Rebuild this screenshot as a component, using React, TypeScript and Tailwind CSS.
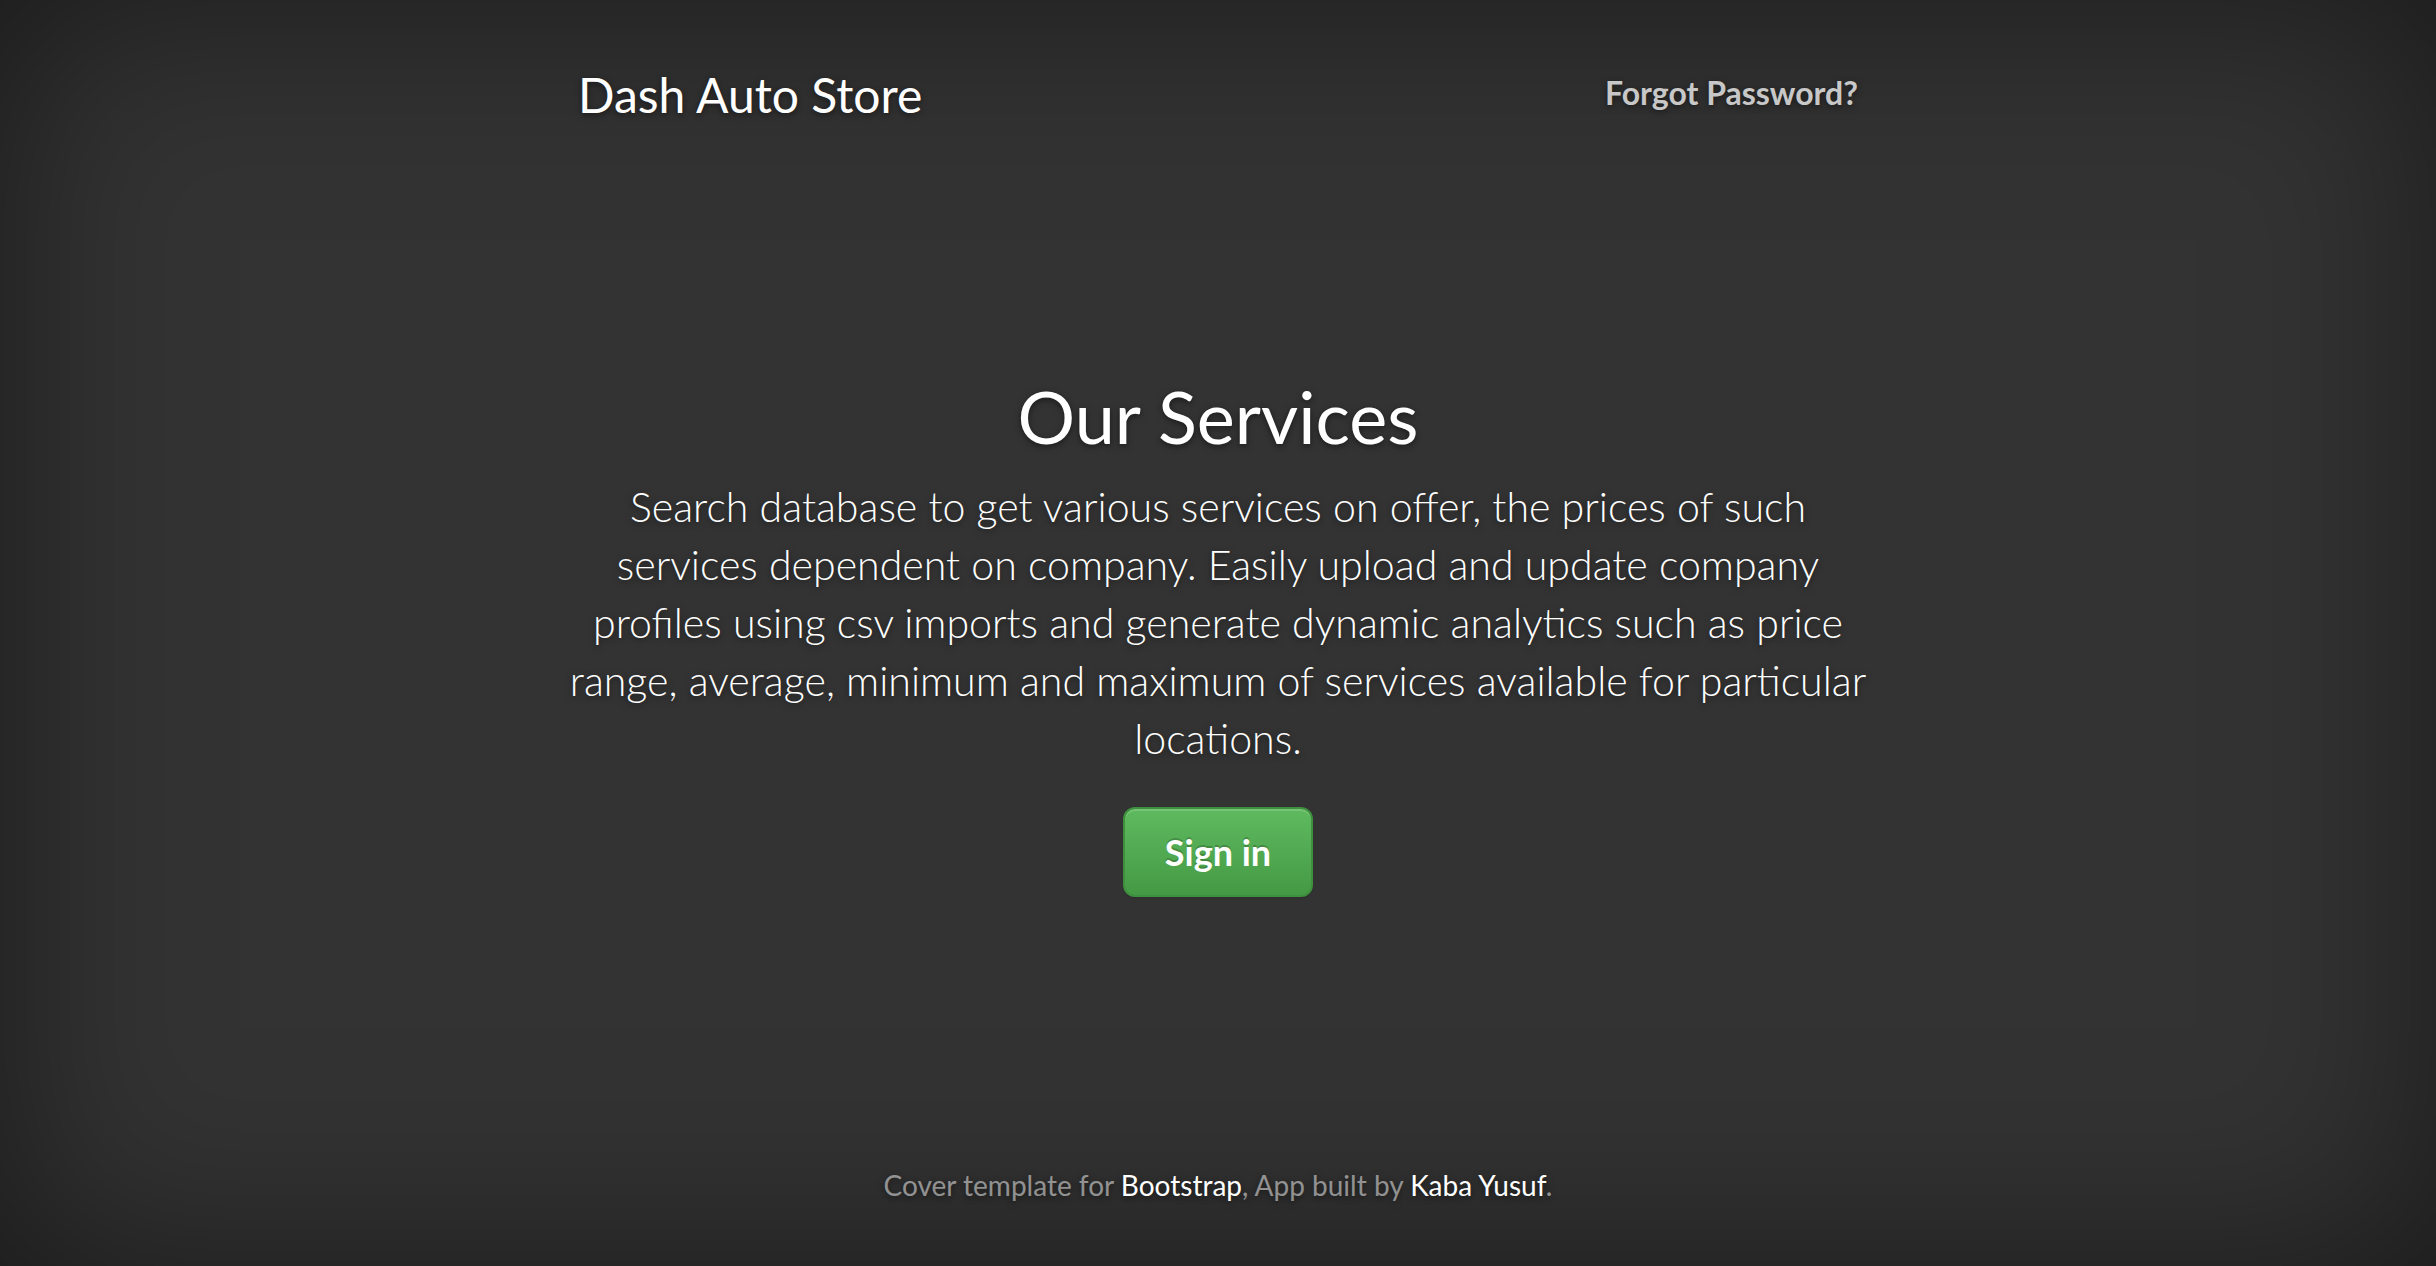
import React from "react";

export default function App() {
  const shadow = "[text-shadow:0_2px_6px_rgba(0,0,0,0.5)]";
  return (
    <div
      className="flex h-screen w-full flex-col bg-[#333333] text-white shadow-[inset_0_0_200px_rgba(0,0,0,0.5)]"
      style={{ fontFamily: "Lato, 'Open Sans', sans-serif" }}
    >
      <header className="mx-auto flex w-[1280px] items-start justify-between pt-[69px]">
        <h3 className={`text-[48px] font-normal leading-[52.8px] text-white ${shadow}`}>
          Dash Auto Store
        </h3>
        <a
          href="#"
          className={`text-[32px] font-bold leading-[48px] text-white/75 ${shadow}`}
        >
          Forgot Password?
        </a>
      </header>

      <main className={`mx-auto mt-[255px] flex w-[1320px] flex-col items-center text-center ${shadow}`}>
        <h1 className="text-[72px] font-normal leading-[79.2px] text-white">Our Services</h1>
        <p className="mt-[21px] text-[41.1px] font-light leading-[58px] text-white">
          Search database to get various services on offer, the prices of such
          <br />
          services dependent on company. Easily upload and update company
          <br />
          profiles using csv imports and generate dynamic analytics such as price
          <br />
          range, average, minimum and maximum of services available for particular
          <br />
          locations.
        </p>
        <a
          href="#"
          className="mt-[40px] rounded-[12px] border-2 border-[#3e8f3e] bg-gradient-to-b from-[#5fba5f] to-[#449a44] px-[40px] py-[19px] text-[36px] font-bold leading-[48px] text-white shadow-[inset_0_2px_0_rgba(255,255,255,0.15),0_2px_2px_rgba(0,0,0,0.075)] [text-shadow:0_-2px_0_rgba(0,0,0,0.2)]"
        >
          Sign in
        </a>
      </main>

      <footer className={`mt-auto pb-[61px] text-center text-[28px] leading-[40px] text-white/50 ${shadow}`}>
        Cover template for{" "}
        <a href="#" className="text-white">
          Bootstrap
        </a>
        , App built by{" "}
        <a href="#" className="text-white">
          Kaba Yusuf
        </a>
        .
      </footer>
    </div>
  );
}
